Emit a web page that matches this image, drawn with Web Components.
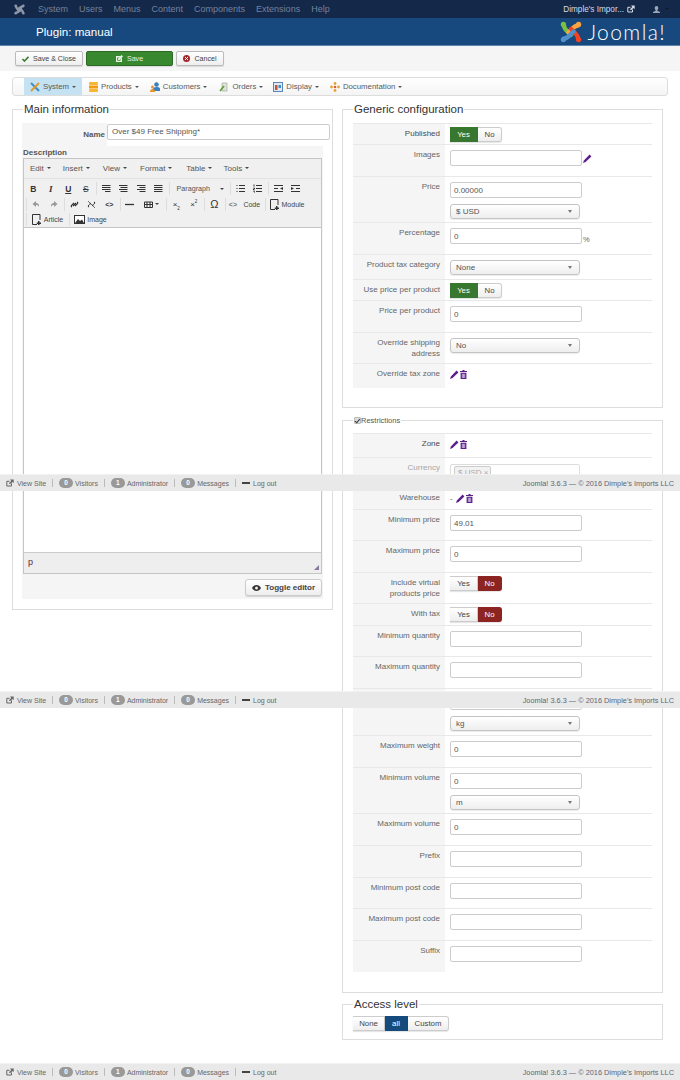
<!DOCTYPE html>
<html>
<head>
<meta charset="utf-8">
<title>Plugin: manual</title>
<style>
	html, body { margin: 0; padding: 0; background: #fff; }
	body { position: relative; height: 1080px; overflow: hidden; font-family: "Liberation Sans", Arial, sans-serif; color: #555; }
	.columns { display: grid; grid-template-columns: 321px 321px; column-gap: 9px; margin: 6px 0 0 12px; align-items: start; }
	.stack { display: flex; flex-direction: column; }
	status-bar { position: absolute; left: 0; right: 0; }
</style>
</head>
<body>
<admin-nav></admin-nav>
<title-bar></title-bar>
<action-toolbar></action-toolbar>
<plugin-menu></plugin-menu>

<div class="columns">
	<field-set legend="Main information" indent="1" pad="7px 9px 10px 9px">
		<main-info></main-info>
	</field-set>
	<div class="stack">
		<field-set legend="Generic configuration" pad="7px 10px 19px 10px">
			<form-row label="Published" h="21" strong><toggle-switch options="Yes,No" widths="28,24" active="0" color="#37772f"></toggle-switch></form-row>
			<form-row label="Images" h="32"><text-box pen></text-box></form-row>
			<form-row label="Price" h="46"><text-box value="0.00000"></text-box><select-box value="$ USD"></select-box></form-row>
			<form-row label="Percentage" h="32"><text-box value="0" suffix="%"></text-box></form-row>
			<form-row label="Product tax category" h="25"><select-box value="None"></select-box></form-row>
			<form-row label="Use price per product" h="21"><toggle-switch options="Yes,No" widths="28,24" active="0" color="#37772f"></toggle-switch></form-row>
			<form-row label="Price per product" h="32"><text-box value="0"></text-box></form-row>
			<form-row label="Override shipping address" h="31"><select-box value="No"></select-box></form-row>
			<form-row label="Override tax zone" h="25"><edit-icons></edit-icons></form-row>
		</field-set>
		<field-set legend="Restrictions" small check pad="7px 10px 20px 10px" style="margin-top:7px">
			<form-row label="Zone" h="24" strong><edit-icons></edit-icons></form-row>
			<form-row label="Currency" h="30" muted><tag-box value="$ USD"></tag-box></form-row>
			<form-row label="Warehouse" h="22"><edit-icons dash></edit-icons></form-row>
			<form-row label="Minimum price" h="31"><text-box value="49.01"></text-box></form-row>
			<form-row label="Maximum price" h="32"><text-box value="0"></text-box></form-row>
			<form-row label="Include virtual products price" h="31"><toggle-switch options="Yes,No" widths="28,24" active="1" color="#8c2421"></toggle-switch></form-row>
			<form-row label="With tax" h="22"><toggle-switch options="Yes,No" widths="28,24" active="1" color="#8c2421"></toggle-switch></form-row>
			<form-row label="Minimum quantity" h="31"><text-box></text-box></form-row>
			<form-row label="Maximum quantity" h="32"><text-box></text-box></form-row>
			<form-row h="47"><text-box></text-box><select-box value="kg"></select-box></form-row>
			<form-row label="Maximum weight" h="32"><text-box value="0"></text-box></form-row>
			<form-row label="Minimum volume" h="46"><text-box value="0"></text-box><select-box value="m"></select-box></form-row>
			<form-row label="Maximum volume" h="32"><text-box value="0"></text-box></form-row>
			<form-row label="Prefix" h="32"><text-box></text-box></form-row>
			<form-row label="Minimum post code" h="31"><text-box></text-box></form-row>
			<form-row label="Maximum post code" h="32"><text-box></text-box></form-row>
			<form-row label="Suffix" h="32"><text-box></text-box></form-row>
		</field-set>
		<field-set legend="Access level" pad="5px 10px 8px 10px" style="margin-top:4px">
			<toggle-switch options="None,all,Custom" widths="32,23,41" active="1" color="#154a7d" flat></toggle-switch>
		</field-set>
	</div>
</div>

<status-bar style="top:474px"></status-bar>
<status-bar style="top:691px"></status-bar>
<status-bar style="top:1063px"></status-bar>

<script>
// small shared drawings
const logoPaths = function(a, b, c, d, sw) {
	return `<g fill="none" stroke-width="`+sw+`" stroke-linecap="round">
		<path stroke="`+a+`" d="M4 4.500c0 3 2 4.500 4 6.500l3 3"/>
		<path stroke="`+b+`" d="M18 4.500c-3 0-4.500 2-6.500 4l-3 3"/>
		<path stroke="`+c+`" d="M18 17.500c0-3-2-4.500-4-6.500l-3-3"/>
		<path stroke="`+d+`" d="M4 17.500c3 0 4.500-2 6.500-4l3-3"/>
	</g>
	<circle cx="3.400" cy="3.400" r="2.600" fill="`+a+`"/><circle cx="18.600" cy="3.400" r="2.600" fill="`+b+`"/>
	<circle cx="18.600" cy="18.600" r="2.600" fill="`+c+`"/><circle cx="3.400" cy="18.600" r="2.600" fill="`+d+`"/>`;
};
const pencil = `<svg width="9" height="9" viewBox="0 0 9 9" style="display:block"><path fill="#5b1e8c" d="M6.600.6l1.800 1.800L2.600 8.100 0 9l.9-2.600z"/></svg>`;
const trash = `<svg width="7" height="9" viewBox="0 0 7 9" style="display:block"><path fill="#5b1e8c" d="M2.500 0h2v1H7v1H0V1h2.500zM.6 2.800h5.800V9H.6zM1.900 3.800v4.200h.6V3.800zm1.300 0v4.200h.6V3.800zm1.300 0v4.200h.6V3.800z" fill-rule="evenodd"/></svg>`;
const extLink = function(color) {
	return `<svg width="8" height="8" viewBox="0 0 8 8" style="display:block"><path fill="none" stroke="`+color+`" d="M5.500 4.500V7H.8V2.300H3.500"/><path fill="`+color+`" d="M4 .5h3.700v3.700L6.500 3 4 5.300 2.900 4.300 5.300 2z"/></svg>`;
};

class AdminNav extends HTMLElement {
	constructor() {
		super();
		this.shadow = this.attachShadow({ mode: "open" });
	}
	connectedCallback() {
		let items = "";
		for (let name of ["System", "Users", "Menus", "Content", "Components", "Extensions", "Help"]) {
			items += `<span>`+name+`</span>`;
		}
		this.shadow.innerHTML = `
			<style>
				:host { display: flex; align-items: center; height: 18px; background: #142849; color: #73829c; font-size: 9px; padding-left: 14px; }
				svg { display: block; }
				.items { display: flex; gap: 11px; margin-left: 13px; }
				.site { margin-left: auto; color: #d5dbe6; font-size: 8.200px; display: flex; align-items: center; gap: 3px; }
				.user { margin: 0 11px 0 18px; display: flex; align-items: center; gap: 5px; }
				.caret { width: 0; height: 0; border: 2px solid transparent; border-top-color: #0c1a30; border-bottom: 0; }
			</style>
			<svg width="11" height="11" viewBox="0 0 22 22">`+logoPaths("#8d97a8", "#8d97a8", "#8d97a8", "#8d97a8", 5)+`</svg>
			<div class="items">`+items+`</div>
			<div class="site">Dimple's Impor... `+extLink("#d5dbe6")+`</div>
			<div class="user">
				<svg width="7" height="7" viewBox="0 0 7 7"><path fill="#9aa5b8" d="M3.500 0c1.100 0 1.800.8 1.800 2 0 1-.5 1.800-1 2.200v.6L7 6v1H0V6l2.700-1.200v-.6C2.200 3.800 1.700 3 1.700 2c0-1.200.7-2 1.800-2z"/></svg>
				<span class="caret"></span>
			</div>
		`;
	}
}
customElements.define('admin-nav', AdminNav);

class TitleBar extends HTMLElement {
	constructor() {
		super();
		this.shadow = this.attachShadow({ mode: "open" });
	}
	connectedCallback() {
		this.shadow.innerHTML = `
			<style>
				:host { display: flex; align-items: center; box-sizing: border-box; height: 28px; background: #17497e; border-bottom: 1px solid #5d86ad; color: #fff; padding: 0 15px 0 36px; }
				h1 { margin: 0; font-size: 11.600px; font-weight: normal; margin-top: -1px; }
				.logo { margin-left: auto; display: flex; align-items: center; gap: 5px; }
				svg { display: block; }
				.word { font-family: "Lato", "Liberation Sans", sans-serif; font-weight: 300; font-size: 21px; line-height: 22px; letter-spacing: 1.400px; margin-right: -1px; }
			</style>
			<h1>Plugin: manual</h1>
			<div class="logo">
				<svg width="22" height="22" viewBox="0 0 22 22">`+logoPaths("#7ac143", "#f9a541", "#f44321", "#5091cd", 4.4)+`</svg>
				<span class="word">Joomla!</span>
			</div>
		`;
	}
}
customElements.define('title-bar', TitleBar);

class ActionToolbar extends HTMLElement {
	constructor() {
		super();
		this.shadow = this.attachShadow({ mode: "open" });
	}
	connectedCallback() {
		this.shadow.innerHTML = `
			<style>
				:host { display: flex; box-sizing: border-box; height: 25px; background: #f5f5f5; padding: 5px 0 0 15px; gap: 3px; }
				button { display: flex; align-items: center; justify-content: center; gap: 4px; box-sizing: border-box; height: 15px; padding: 0; font: 7.100px "Liberation Sans", Arial, sans-serif; color: #444; border: 1px solid #bbb; border-radius: 2px; background: linear-gradient(#fff, #eee); box-shadow: 0 1px 1px rgba(0,0,0,.12); }
				.green { background: #37882f; border-color: #2c6b26; color: #e8f3e6; }
				svg { display: block; }
			</style>
			<button style="width:68px"><svg width="7" height="6" viewBox="0 0 7 6"><path fill="none" stroke="#3f7d2c" stroke-width="1.600" d="M.5 3l2 2L6.500.8"/></svg>Save &amp; Close</button>
			<button class="green" style="width:87px"><svg width="7" height="7" viewBox="0 0 7 7"><path fill="#e8f3e6" d="M0 1h4.500L3 2.500H1.200v3.300h3.300V4L6 2.800V7H0z"/><path fill="#e8f3e6" d="M5.500 0L7 1.500 3.500 5H2V3.500z"/></svg>Save</button>
			<button style="width:48px"><svg width="7" height="7" viewBox="0 0 7 7"><circle cx="3.500" cy="3.500" r="3.500" fill="#a8262a"/><path stroke="#fff" d="M2 2l3 3M5 2L2 5"/></svg>Cancel</button>
		`;
	}
}
customElements.define('action-toolbar', ActionToolbar);

class PluginMenu extends HTMLElement {
	constructor() {
		super();
		this.shadow = this.attachShadow({ mode: "open" });
	}
	connectedCallback() {
		const icons = {
			System: `<path stroke="#3d8fc4" stroke-width="2" d="M1 1l8 8"/><path stroke="#e39a2c" stroke-width="2" d="M9 1L1 9"/>`,
			Products: `<rect x="1" width="9" height="3" rx="1" fill="#f7b733"/><rect x="1" y="3.500" width="9" height="3" fill="#f39c12"/><rect x="1" y="7" width="9" height="3" rx="1" fill="#f7b733"/>`,
			Customers: `<circle cx="6.500" cy="2.500" r="2.300" fill="#3a7fc0"/><path fill="#3a7fc0" d="M2.500 9c0-3 1.500-4 4-4s4 1 4 4z"/><circle cx="2.500" cy="5" r="1.500" fill="#e8952f"/><path fill="#e8952f" d="M0 10c0-2 1-3 2.500-3S5 8 5 10z"/>`,
			Orders: `<path fill="#dfe3da" stroke="#9aa08f" stroke-width=".6" d="M3 1h5v8H3z"/><path stroke="#5a9a2c" stroke-width="1.500" d="M1 9l4-5"/>`,
			Display: `<rect x=".5" y=".5" width="9" height="9" fill="#dfeaf5" stroke="#5a86b5"/><rect x="2" y="3" width="2.500" height="5" fill="#c9503a"/><rect x="5.500" y="3" width="2.500" height="3" fill="#3a8fc9"/>`,
			Documentation: `<g fill="#e8a23a"><circle cx="5" cy="1.500" r="1.400"/><circle cx="5" cy="8.500" r="1.400"/><circle cx="1.500" cy="5" r="1.400"/><circle cx="8.500" cy="5" r="1.400"/></g><circle cx="5" cy="5" r="1.300" fill="#d9602c"/>`
		};
		const marginLeft = { System: 0, Products: 0, Customers: -1, Orders: 0, Display: -2, Documentation: -1 };
		let items = "";
		for (let name in icons) {
			items += `<a class="`+(name == "System" ? "on" : "")+`" style="margin-left:`+marginLeft[name]+`px"><svg width="10" height="10" viewBox="0 0 10 10">`+icons[name]+`</svg><span>`+name+`</span><i></i></a>`;
		}
		this.shadow.innerHTML = `
			<style>
				:host { display: flex; box-sizing: border-box; height: 19px; margin: 6px 12px 0; background: linear-gradient(#fff, #f4f4f4); border: 1px solid #ddd; border-radius: 3px; padding-left: 11px; font-size: 7.800px; color: #5a5a5a; }
				a { display: flex; align-items: center; gap: 3px; padding: 0 6px; }
				a.on { background: #c5e2f3; }
				i { width: 0; height: 0; border: 2px solid transparent; border-top-color: #555; border-bottom: 0; margin-top: 1px; }
				svg { display: block; }
			</style>
			`+items+`
		`;
	}
}
customElements.define('plugin-menu', PluginMenu);

class FieldSet extends HTMLElement {
	constructor() {
		super();
		this.shadow = this.attachShadow({ mode: "open" });
	}
	connectedCallback() {
		let small = this.hasAttribute("small");
		let check = this.hasAttribute("check") ? `<span class="check"></span>` : "";
		this.shadow.innerHTML = `
			<style>
				:host { display: block; }
				fieldset { margin: 0; min-width: 0; border: 1px solid #ddd; padding: `+this.getAttribute("pad")+`; }
				legend { display: flex; align-items: center; margin-left: `+(this.getAttribute("indent") || "0")+`px; padding: 0 1px; font-size: `+(small ? "7.500px" : "11.500px")+`; line-height: `+(small ? "11px" : "14px")+`; color: `+(small ? "#555" : "#333")+`; }
				.check { width: 7px; height: 7px; background: #ddd; border: 1px solid #bbb; box-sizing: border-box; border-radius: 1px; position: relative; }
				.check::after { content: ""; position: absolute; left: 1px; top: 0; width: 2px; height: 3.500px; border: solid #333; border-width: 0 1px 1px 0; transform: rotate(40deg); }
			</style>
			<fieldset><legend>`+check+this.getAttribute("legend")+`</legend><slot></slot></fieldset>
		`;
	}
}
customElements.define('field-set', FieldSet);

class FormRow extends HTMLElement {
	constructor() {
		super();
		this.shadow = this.attachShadow({ mode: "open" });
	}
	connectedCallback() {
		let color = "#666";
		if (this.hasAttribute("muted")) color = "#a5a5a5";
		if (this.hasAttribute("strong")) color = "#4a4a4a";
		this.shadow.innerHTML = `
			<style>
				:host { display: grid; grid-template-columns: 92px 1fr; box-sizing: border-box; height: `+this.getAttribute("h")+`px; border-top: 1px solid #e8e8e8; font-size: 8px; line-height: 11px; color: `+color+`; }
				.label { background: #f5f5f5; text-align: right; padding: 4px 5px 0 5px; box-sizing: border-box; }
				.value { padding: 5px 0 0 5px; display: flex; flex-direction: column; align-items: flex-start; gap: 6px; }
			</style>
			<div class="label">`+(this.getAttribute("label") || "")+`</div>
			<div class="value"><slot></slot></div>
		`;
	}
}
customElements.define('form-row', FormRow);

class TextBox extends HTMLElement {
	constructor() {
		super();
		this.shadow = this.attachShadow({ mode: "open" });
	}
	connectedCallback() {
		let after = "";
		if (this.hasAttribute("pen")) {
			after = `<span class="after">`+pencil+`</span>`;
		}
		if (this.hasAttribute("suffix")) {
			after = `<span class="after pct">`+this.getAttribute("suffix")+`</span>`;
		}
		this.shadow.innerHTML = `
			<style>
				:host { display: flex; align-items: center; height: 16px; }
				.box { box-sizing: border-box; width: 132px; height: 16px; border: 1px solid #ccc; border-radius: 2px; background: #fff; padding: 0 3px; font-size: 8px; line-height: 15px; color: #555; }
				.after { margin-left: 1px; }
				.pct { align-self: flex-end; font-size: 7.500px; line-height: 9px; }
			</style>
			<div class="box">`+(this.getAttribute("value") || "")+`</div>`+after+`
		`;
	}
}
customElements.define('text-box', TextBox);

class SelectBox extends HTMLElement {
	constructor() {
		super();
		this.shadow = this.attachShadow({ mode: "open" });
	}
	connectedCallback() {
		this.shadow.innerHTML = `
			<style>
				:host { display: block; }
				.box { display: flex; align-items: center; justify-content: space-between; box-sizing: border-box; width: 130px; height: 15px; border: 1px solid #c4c4c4; border-radius: 3px; background: linear-gradient(#fff, #eee); padding: 0 7px 0 5px; font-size: 8px; color: #555; box-shadow: 0 1px 1px rgba(0,0,0,.08); }
				i { width: 0; height: 0; border: 2px solid transparent; border-top: 3px solid #777; border-bottom: 0; }
			</style>
			<div class="box"><span>`+this.getAttribute("value")+`</span><i></i></div>
		`;
	}
}
customElements.define('select-box', SelectBox);

class TagBox extends HTMLElement {
	constructor() {
		super();
		this.shadow = this.attachShadow({ mode: "open" });
	}
	connectedCallback() {
		this.shadow.innerHTML = `
			<style>
				:host { display: block; margin-top: 1px; }
				.box { box-sizing: border-box; width: 130px; height: 17px; border: 1px solid #ddd; border-radius: 2px; background: #fff; padding: 1px 3px; }
				.tag { display: inline-block; box-sizing: border-box; height: 13px; line-height: 12px; padding: 0 2px 0 3px; border: 1px solid #ccc; border-radius: 2px; background: #f2f2f2; font-size: 8px; color: #aaa; }
			</style>
			<div class="box"><span class="tag">`+this.getAttribute("value")+` ×</span></div>
		`;
	}
}
customElements.define('tag-box', TagBox);

class EditIcons extends HTMLElement {
	constructor() {
		super();
		this.shadow = this.attachShadow({ mode: "open" });
	}
	connectedCallback() {
		let dash = this.hasAttribute("dash") ? `<span>-</span>` : "";
		this.shadow.innerHTML = `
			<style>
				:host { display: flex; align-items: center; gap: 1px; height: 9px; margin-top: 1px; color: #555; font-size: 8px; }
				span { margin-right: 2px; }
			</style>
			`+dash+pencil+trash+`
		`;
	}
}
customElements.define('edit-icons', EditIcons);

class ToggleSwitch extends HTMLElement {
	constructor() {
		super();
		this.shadow = this.attachShadow({ mode: "open" });
	}
	connectedCallback() {
		let options = this.getAttribute("options").split(",");
		let widths = this.getAttribute("widths").split(",");
		let active = parseInt(this.getAttribute("active"));
		let btns = "";
		for (let i in options) {
			let style = "width:" + widths[i] + "px;";
			if (i == active) {
				style += "background:" + this.getAttribute("color") + ";color:#fff;border-color:" + this.getAttribute("color") + ";";
			}
			btns += `<span style="`+style+`">`+options[i]+`</span>`;
		}
		this.shadow.innerHTML = `
			<style>
				:host { display: flex; width: fit-content; margin-top: `+(this.hasAttribute("flat") ? "0" : "-2px")+`; }
				span { box-sizing: border-box; height: 15px; line-height: 14px; text-align: center; font-size: 7.800px; color: #444; background: linear-gradient(#fff, #eee); border: 1px solid #ccc; border-left-width: 0; box-shadow: 0 1px 1px rgba(0,0,0,.1); }
				span:first-child { border-left-width: 1px; border-radius: 3px 0 0 3px; }
				span:last-child { border-radius: 0 3px 3px 0; }
			</style>
			`+btns+`
		`;
	}
}
customElements.define('toggle-switch', ToggleSwitch);

class MainInfo extends HTMLElement {
	constructor() {
		super();
		this.shadow = this.attachShadow({ mode: "open" });
	}
	connectedCallback() {
		this.shadow.innerHTML = `
			<style>
				:host { display: block; font-size: 8px; color: #555; }
				.name { display: flex; height: 23px; }
				.name b { box-sizing: border-box; width: 85px; flex: none; background: #f5f5f5; text-align: right; padding: 6px 2px 0 0; line-height: 11px; }
				.box { box-sizing: border-box; width: 223px; height: 16px; margin-top: 1px; border: 1px solid #ccc; border-radius: 2px; padding: 0 4px; line-height: 13px; flex: none; }
				.desc { box-sizing: border-box; background: #f5f5f5; height: 453px; padding: 1px 1px 0; }
				.desc b { display: block; line-height: 11px; height: 11px; }
				.toggle { display: flex; justify-content: flex-end; margin-top: 5px; }
				button { display: flex; align-items: center; justify-content: center; gap: 4px; box-sizing: border-box; width: 77px; height: 17px; padding: 0; font: bold 8px "Liberation Sans", Arial, sans-serif; color: #444; border: 1px solid #ccc; border-radius: 3px; background: linear-gradient(#fff, #eee); box-shadow: 0 1px 1px rgba(0,0,0,.15); }
				svg { display: block; }
			</style>
			<div class="name"><b>Name</b><div class="box">Over $49 Free Shipping*</div></div>
			<div class="desc">
				<b>Description</b>
				<tiny-editor></tiny-editor>
				<div class="toggle"><button><svg width="9" height="6" viewBox="0 0 9 6"><path fill="#333" d="M0 3c1-1.800 2.700-3 4.500-3S8 1.200 9 3C8 4.800 6.300 6 4.500 6S1 4.800 0 3z"/><circle cx="4.500" cy="3" r="1.500" fill="#eee"/></svg>Toggle editor</button></div>
			</div>
		`;
	}
}
customElements.define('main-info', MainInfo);

class TinyEditor extends HTMLElement {
	constructor() {
		super();
		this.shadow = this.attachShadow({ mode: "open" });
	}
	icon(inner, w) {
		return `<svg width="`+(w || 9)+`" height="9" viewBox="0 0 `+(w || 9)+` 9" fill="none" stroke="#333">`+inner+`</svg>`;
	}
	btn(content, w, extra) {
		return `<span class="b `+(extra || "")+`" style="width:`+(w || 17.5)+`px">`+content+`</span>`;
	}
	connectedCallback() {
		const lines = function(a, b, c, d) {
			return `<path d="M`+a+` 1.500H9M`+b+` 3.500H9M`+c+` 5.500H9M`+d+` 7.500H9" transform="translate(-.5 0)"/>`;
		};
		const sep = `<span class="sep"></span>`;
		const doc = `<svg width="10" height="11" viewBox="0 0 10 11" fill="none" stroke="#333"><path d="M8 6V.5H.5v10H5"/><path fill="#333" stroke="none" d="M6 7h1.500v1.500H9V10H7.500v1H6V10H4.800V8.500H6z"/></svg>`;
		const undo = function(c, flip) {
			return `<svg width="9" height="9" viewBox="0 0 9 9" `+(flip ? `style="transform:scaleX(-1)"` : "")+`><path fill="`+c+`" d="M4 1L.5 4 4 7V5c1.500 0 2.500.5 3 2 .5-2.500-1-4-3-4z"/></svg>`;
		};
		const link = `<path stroke-width="1.200" d="M1.800 7.200c-1-1 0-2 0-2L4 3M7.200 1.800c1 1 0 2 0 2L5 6M3 6l3-3"/>`;
		const unlink = `<path stroke-width="1.100" stroke-dasharray="2 1" d="M1.800 7.200c-1-1 0-2 0-2L4 3M7.200 1.800c1 1 0 2 0 2L5 6"/><path stroke-width=".7" d="M1 1l7 7"/>`;
		const row1 = this.btn(`<b>B</b>`) + this.btn(`<i class="serif">I</i>`) + this.btn(`<b class="u">U</b>`) + this.btn(`<span class="s">S</span>`) + sep
			+ this.btn(this.icon(lines(.5, .5, .5, 3.500))) + this.btn(this.icon(lines(.5, 2, .5, 2))) + this.btn(this.icon(lines(.5, 3, .5, 3))) + this.btn(this.icon(lines(.5, .5, .5, .5))) + sep
			+ `<span class="b list" style="width:58px"><span>Paragraph</span><i class="caret"></i></span>` + sep
			+ this.btn(this.icon(`<path d="M3 1.500H9M3 4.500H9M3 7.500H9"/><path stroke-dasharray="1 2" d="M1 1v7"/>`)) + this.btn(this.icon(`<path d="M3 1.500H9M3 4.500H9M3 7.500H9"/><path d="M1 .5v2M.5 4h1v1h-1v1h1M.5 7.500h1v1"/>`)) + sep
			+ this.btn(this.icon(`<path d="M0 1.500h9M0 7.500h9M0 4.500h4" stroke-width="1.200"/><path fill="#333" stroke="none" d="M9 3v3L6 4.500z"/>`)) + this.btn(this.icon(`<path d="M0 1.500h9M0 7.500h9M5 4.500h4" stroke-width="1.200"/><path fill="#333" stroke="none" d="M0 3v3l3-1.500z"/>`));
		const row2 = sep + this.btn(undo("#999")) + this.btn(undo("#999", true)) + sep
			+ this.btn(this.icon(link)) + this.btn(this.icon(unlink)) + this.btn(`<span class="code">&lt;&gt;</span>`) + sep
			+ this.btn(this.icon(`<path d="M0 4.500h9" stroke-width="1.300"/>`)) + this.btn(this.icon(`<path d="M.5 2h8v5.500h-8zM.5 4.500h8M3 2v5.500M6 2v5.500"/>`) + `<i class="caret tiny"></i>`, 26) + sep
			+ this.btn(`<span class="sc">×<sub>2</sub></span>`) + this.btn(`<span class="sc">×<sup>2</sup></span>`) + sep
			+ this.btn(`<span class="omega">Ω</span>`) + sep
			+ this.btn(`<span class="code grey">&lt;&gt;</span>&nbsp;<span class="txt grey">Code</span>`, 37) + sep
			+ this.btn(doc + `<span class="txt">Module</span>`, 42);
		const row3 = sep + this.btn(doc + `<span class="txt">Article</span>`, 40) + sep
			+ this.btn(`<svg width="11" height="9" viewBox="0 0 11 9"><rect x=".5" y=".5" width="10" height="8" fill="#fff" stroke="#333"/><path fill="#333" d="M1 8l3-4 2 2 2-1.500L10 8z"/></svg><span class="txt">Image</span>`, 40);
		let menu = "";
		const menus = [["Edit", 6], ["Insert", 12], ["View", 13], ["Format", 13], ["Table", 14], ["Tools", 11]];
		for (let m of menus) {
			menu += `<span style="margin-left:`+m[1]+`px">`+m[0]+`<i class="caret"></i></span>`;
		}
		this.shadow.innerHTML = `
			<style>
				:host { display: block; box-sizing: border-box; width: 299px; height: 416px; border: 1px solid #c5c5c5; background: #f0f0f0; font-size: 8px; color: #333; }
				.menu { display: flex; align-items: center; box-sizing: border-box; height: 20px; padding-bottom: 1px; border-bottom: 1px solid #e2e2e2; color: #555; font-size: 8px; }
				.menu span { display: flex; align-items: center; gap: 3px; }
				.row { display: flex; align-items: center; height: 15.500px; padding-left: .5px; }
				.tools { box-sizing: border-box; height: 49px; padding-top: 2px; border-bottom: 1px solid #c5c5c5; }
				.b { display: flex; align-items: center; justify-content: center; gap: 2px; height: 14px; flex: none; font-size: 8.500px; }
				.b b, .b .s { font-size: 8.500px; }
				.serif { font: italic 9px "Liberation Serif", serif; font-weight: bold; }
				.u { text-decoration: underline; }
				.s { text-decoration: line-through; }
				.list { justify-content: space-between; box-sizing: border-box; padding: 0 5px 0 6px; font-size: 7.200px; color: #555; }
				.sep { width: 1px; height: 13px; background: #ddd; margin: 0 .5px 0 1.500px; flex: none; }
				.caret { width: 0; height: 0; border: 2px solid transparent; border-top: 2.500px solid #444; border-bottom: 0; display: inline-block; }
				.code { font-size: 7px; font-weight: bold; }
				.grey { color: #777; }
				.sc { font-size: 8px; }
				sub, sup { font-size: 4.500px; line-height: 0; }
				.omega { font-size: 11px; }
				.txt { font-size: 7px; color: #444; }
				svg { display: block; flex: none; }
				.area { background: #fff; height: 325px; border-bottom: 1px solid #ccc; box-sizing: border-box; }
				.foot { position: relative; box-sizing: border-box; height: 20px; padding: 4px 4px; background: #eee; font-size: 9px; line-height: 11px; color: #5a2a3a; }
				.grip { position: absolute; right: 2px; bottom: 3px; }
			</style>
			<div class="menu">`+menu+`</div>
			<div class="tools">
				<div class="row">`+row1+`</div>
				<div class="row">`+row2+`</div>
				<div class="row">`+row3+`</div>
			</div>
			<div class="area"></div>
			<div class="foot">p<svg class="grip" width="5" height="5" viewBox="0 0 5 5"><path fill="#8a7a9a" d="M5 0v5H0z"/></svg></div>
		`;
	}
}
customElements.define('tiny-editor', TinyEditor);

class StatusBar extends HTMLElement {
	constructor() {
		super();
		this.shadow = this.attachShadow({ mode: "open" });
	}
	connectedCallback() {
		this.shadow.innerHTML = `
			<style>
				:host { display: flex; align-items: center; box-sizing: border-box; height: 17px; background: #e9e9e9; border-top: 1px solid #f2f2f2; padding: 0 6px; font-size: 7px; color: #666; }
				.item { display: flex; align-items: center; gap: 2px; }
				.sep { width: 1px; height: 8px; background: #bbb; margin: 0 6px; }
				.badge { box-sizing: border-box; width: 14px; height: 10px; line-height: 10px; border-radius: 5px; background: #999; color: #fff; text-align: center; font-size: 6.500px; font-weight: bold; }
				.dash { width: 8px; height: 1.500px; background: #444; margin-right: 1px; }
				.right { margin-left: auto; color: #5d6673; font-size: 7.350px; }
				svg { display: block; }
			</style>
			<div class="item">`+extLink("#666")+`<span style="margin-left:1px">View Site</span></div><span class="sep"></span>
			<div class="item"><span class="badge">0</span><span>Visitors</span></div><span class="sep"></span>
			<div class="item"><span class="badge">1</span><span>Administrator</span></div><span class="sep"></span>
			<div class="item"><span class="badge">0</span><span>Messages</span></div><span class="sep"></span>
			<div class="item"><span class="dash"></span><span>Log out</span></div>
			<div class="right">Joomla! 3.6.3 — © 2016 Dimple's Imports LLC</div>
		`;
	}
}
customElements.define('status-bar', StatusBar);
</script>
</body>
</html>
